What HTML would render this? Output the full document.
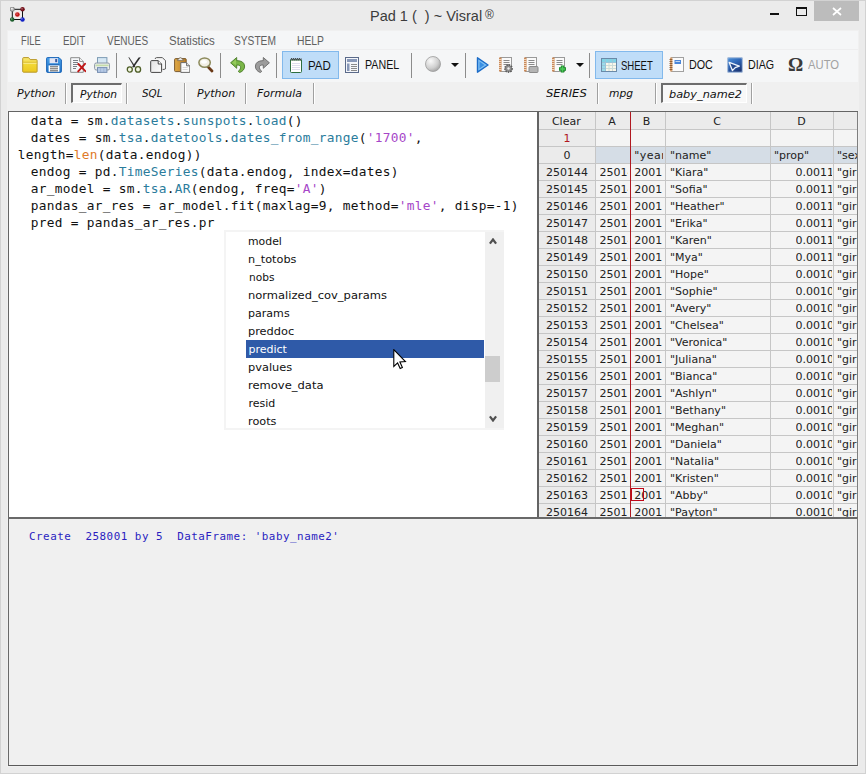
<!DOCTYPE html>
<html>
<head>
<meta charset="utf-8">
<title>Pad 1 ( ) ~ Visral</title>
<style>
*{box-sizing:border-box;margin:0;padding:0}
html,body{width:866px;height:774px;overflow:hidden;background:#ebebeb}
body{position:relative;font-family:"Liberation Sans",sans-serif;color:#000}
.abs{position:absolute}
#win{left:0;top:0;width:866px;height:774px;background:#ebebeb;border:1px solid #d2d2d2}
.ttl{font-size:14.5px;color:#3c3c3c;line-height:18px;white-space:nowrap}
#client{left:8px;top:31px;width:850px;height:735px;background:#f0f0f0;box-shadow:0 0 0 1px #f0f0f0}
#menubar{left:8px;top:31px;width:850px;height:19px;background:#f5f6f7;border-bottom:1px solid #eeeeef}
.mi{font-size:12.3px;line-height:14px;color:#606060;white-space:nowrap}
#toolbar{left:8px;top:50px;width:850px;height:32px;background:#f5f6f7}
.tsep{width:1px;background:#8c8c8c}
.tbtn{font-size:12.3px;line-height:14px;color:#111;white-space:nowrap}
.sel{background:#bfddf8;border:1px solid #82b9ec}
.tab{font-family:"DejaVu Sans",sans-serif;font-style:italic;font-size:11px;line-height:14px;color:#111;white-space:nowrap}
.vsep{width:2px;border-left:1px solid #a0a0a0;border-right:1px solid #fff}
.sunk{border-style:solid;border-width:2px 1px 1px 2px;border-color:#6d6d6d #fff #fff #6d6d6d;background:#f8f8f8}
#editor{left:8px;top:111px;width:529px;height:407px;background:#fff;border-left:1px solid #646464;border-top:1px solid #646464}
#code{left:17.8px;top:112px;font-family:"DejaVu Sans Mono","Liberation Mono",monospace;font-size:12.8px;letter-spacing:.294px;line-height:17px;color:#111;white-space:pre}
#code div{height:17px}
#code .in{margin-left:-3px}
.c1{color:#2b7c9c}.c2{color:#e07a28}.c3{color:#a646c8}
#list{left:224px;top:230px;width:280px;height:200px;background:#fff;border:2px solid #f4f4f4}
.li{font-family:"DejaVu Sans",sans-serif;font-size:11px;line-height:14px;color:#111;white-space:nowrap}
#sheet{left:537px;top:111px;width:321px;height:407px;background:#f0f0f0;border-left:2px solid #646464;border-top:1px solid #646464;overflow:hidden}
.sc{font-family:"DejaVu Sans",sans-serif;font-size:11px;line-height:14px;white-space:nowrap;overflow:hidden}
#console{left:8px;top:517px;width:850px;height:249px;background:#f0f0f0;border:2px solid #696969;border-left-width:1px;border-right:1px solid #7e7e7e;border-bottom:1px solid #5a5a5a}
.ctx{font-family:"DejaVu Sans Mono",monospace;font-size:10.8px;letter-spacing:.5px;line-height:14px;color:#2a1ec0;white-space:pre}
</style>
</head>
<body>
<div id="win" class="abs"></div>
<div id="client" class="abs"></div>
<div id="menubar" class="abs"></div>
<div id="toolbar" class="abs"></div>
<div class="abs mi" id="m1" style="left:21.04px;top:34px;transform:scaleX(0.7580);transform-origin:0 0;">FILE</div>
<div class="abs mi" id="m2" style="left:62.99px;top:34px;transform:scaleX(0.7970);transform-origin:0 0;">EDIT</div>
<div class="abs mi" id="m3" style="left:106.56px;top:34px;transform:scaleX(0.8129);transform-origin:0 0;">VENUES</div>
<div class="abs mi" id="m4" style="left:168.63px;top:34px;transform:scaleX(0.9303);transform-origin:0 0;">Statistics</div>
<div class="abs mi" id="m5" style="left:234.26px;top:34px;transform:scaleX(0.8282);transform-origin:0 0;">SYSTEM</div>
<div class="abs mi" id="m6" style="left:297.12px;top:34px;transform:scaleX(0.8399);transform-origin:0 0;">HELP</div>
<div class="abs ttl" id="title" style="left:370.00px;top:6.6px;transform:scaleX(1.0000);transform-origin:0 0;">Pad 1 (&nbsp; ) ~ Visral&thinsp;<span style="font-size:12px;position:relative;top:-2px">®</span></div>

<svg class="abs" style="left:10px;top:7px" width="16" height="16" viewBox="0 0 16 16">
<rect x="2.3" y="2.3" width="10.2" height="10.2" fill="none" stroke="#111" stroke-width="1"/>
<circle cx="7.4" cy="7.5" r="3.6" fill="#fbe4e4" opacity=".8"/>
<circle cx="7.4" cy="7.5" r="2.3" fill="#c41a1a"/>
<circle cx="2.3" cy="2.2" r="2.25" fill="#b4b4b4" stroke="#555" stroke-width=".5"/>
<circle cx="12.5" cy="2.3" r="2.25" fill="#74101a"/>
<circle cx="2.2" cy="12.5" r="2.25" fill="#1c5e2c"/>
<circle cx="12.5" cy="12.4" r="2.25" fill="#1020c4"/>
<circle cx="1.9" cy="1.7" r=".9" fill="#fff" opacity=".85"/><circle cx="12" cy="1.8" r=".6" fill="#fff" opacity=".75"/><circle cx="11.9" cy="11.8" r=".65" fill="#fff" opacity=".8"/><circle cx="1.8" cy="11.9" r=".6" fill="#fff" opacity=".7"/><circle cx="7" cy="7" r=".6" fill="#fff" opacity=".75"/>
</svg>
<div class="abs" style="left:770px;top:13px;width:9px;height:2px;background:#111"></div>
<div class="abs" style="left:796px;top:7px;width:11px;height:9px;border:1px solid #111;border-top-width:2px"></div>
<div class="abs" style="left:814px;top:1px;width:45px;height:20px;background:#bcbcbc"></div>
<svg class="abs" style="left:832px;top:7px" width="10" height="9" viewBox="0 0 10 9"><path d="M1 1 L9 8 M9 1 L1 8" stroke="#fff" stroke-width="1.7" fill="none"/></svg>
<svg class="abs" style="left:22px;top:57px" width="16" height="16" viewBox="0 0 16 16"><defs><linearGradient id="gf" x1="0" y1="0" x2="0" y2="1"><stop offset="0" stop-color="#f8e878"/><stop offset=".45" stop-color="#f2d836"/><stop offset="1" stop-color="#ecc820"/></linearGradient></defs>
<path d="M.7 1.6 Q.7 .6 1.7 .6 H6 Q7 .6 7.6 1.6 L8.2 2.6 H14.3 Q15.1 2.6 15.1 3.4 V14.4 Q15.1 15.2 14.3 15.2 H1.5 Q.7 15.2 .7 14.4 Z" fill="url(#gf)" stroke="#b8982a" stroke-width="1"/>
<path d="M1.2 5.3 H14.6" stroke="#d9b92c" stroke-width="1"/><path d="M1.3 6.3 H14.5" stroke="#f9ec90" stroke-width="1"/></svg>
<svg class="abs" style="left:46px;top:57px" width="16" height="16" viewBox="0 0 16 16"><defs><linearGradient id="gv" x1="0" y1="0" x2="0" y2="1"><stop offset="0" stop-color="#4aa2ec"/><stop offset="1" stop-color="#1f72c6"/></linearGradient></defs>
<path d="M.6 1.4 Q.6 .6 1.4 .6 H13 L15.4 3 V14.6 Q15.4 15.4 14.6 15.4 H1.4 Q.6 15.4 .6 14.6 Z" fill="url(#gv)" stroke="#1c66b8" stroke-width="1"/>
<rect x="3.6" y="1.2" width="8.4" height="5" fill="#e4e6f4"/><rect x="9.2" y="2" width="2" height="3.2" fill="#3a5aa0"/>
<rect x="2.6" y="7.4" width="10.8" height="1" fill="#1c5aa8"/>
<rect x="2.6" y="8.4" width="10.8" height="6.4" fill="#fff"/><path d="M4 9.8 H12 M4 11.8 H12 M4 13.8 H12" stroke="#4a4a4a" stroke-width=".9"/></svg>
<svg class="abs" style="left:70px;top:57px" width="16" height="16" viewBox="0 0 16 16"><path d="M.7 .7 H9.6 L13.3 4.4 V15.3 H.7 Z" fill="#f6f8fa" stroke="#8a8a8a" stroke-width="1"/><path d="M9.6 .7 V4.4 H13.3" fill="#fff" stroke="#8a8a8a" stroke-width="1"/>
<path d="M3 3.5 H8 M3 5.5 H8 M3 7.5 H8 M3 9.5 H7 M3 11.5 H6" stroke="#7a8088" stroke-width="1"/>
<path d="M8.4 7 L15.4 14.2 M15 6.8 L8.2 14.4" stroke="#c01818" stroke-width="1.9" fill="none" stroke-linecap="round"/></svg>
<svg class="abs" style="left:94px;top:57px" width="16" height="16" viewBox="0 0 16 16"><rect x="3.5" y=".6" width="9.4" height="6.4" fill="#d6e8f4" stroke="#7e9cb4" stroke-width="1"/>
<rect x=".6" y="6" width="15" height="7" rx="1.6" fill="#eaeeec" stroke="#8c98a6" stroke-width="1"/>
<rect x="1.6" y="7.6" width="13" height="1.6" fill="#c4dca8"/>
<rect x="3.5" y="10.6" width="9.4" height="4.8" fill="#b6cae6" stroke="#7890b2" stroke-width="1"/><path d="M6.6 11.2 V15 M9.8 11.2 V15" stroke="#9ab0d0" stroke-width=".8"/></svg>
<div class="abs tsep" style="left:116px;top:53px;height:25px"></div>
<svg class="abs" style="left:126px;top:57px" width="16" height="16" viewBox="0 0 16 16"><path d="M2.3 .3 L3.2 .3 L9.4 9.6 L8.2 10.4 Z" fill="#3a3a3a"/><path d="M14.8 .2 L12.6 .6 L6.2 9.8 L7.6 10.6 Z" fill="#2e2e2e"/>
<ellipse cx="3.8" cy="12.5" rx="2.5" ry="2.6" fill="#f2f6e2" stroke="#4e5e28" stroke-width="1.3"/><ellipse cx="12" cy="12.4" rx="2.6" ry="2.7" fill="#f2f6e2" stroke="#4e5e28" stroke-width="1.3"/></svg>
<svg class="abs" style="left:150px;top:57px" width="16" height="16" viewBox="0 0 16 16"><defs><linearGradient id="gc" x1="0" y1="0" x2="1" y2="1"><stop offset="0" stop-color="#e2e2e2"/><stop offset="1" stop-color="#fdfdfd"/></linearGradient></defs>
<path d="M5.2 2 Q5.2 .6 6.6 .6 H12.4 L15.6 3.8 V11 Q15.6 12.4 14.2 12.4 H12.6" fill="#f6f6f6" stroke="#5a5a5a" stroke-width="1"/>
<path d="M.7 4.6 Q.7 3.6 1.7 3.6 H8.2 L11.6 7 V14.6 Q11.6 15.4 10.8 15.4 H1.5 Q.7 15.4 .7 14.6 Z" fill="url(#gc)" stroke="#444" stroke-width="1"/><path d="M8.2 3.6 V7 H11.6" fill="#fff" stroke="#444" stroke-width="1"/></svg>
<svg class="abs" style="left:174px;top:57px" width="16" height="16" viewBox="0 0 16 16"><defs><linearGradient id="gp" x1="0" y1="0" x2="1" y2="0"><stop offset="0" stop-color="#e0aa48"/><stop offset="1" stop-color="#b87a22"/></linearGradient></defs>
<rect x=".6" y="1.6" width="11.6" height="13" rx="1" fill="url(#gp)" stroke="#7a5a30" stroke-width="1"/>
<path d="M3.4 3.6 V2.2 H4.6 Q5 .6 6.4 .6 Q7.8 .6 8.2 2.2 H9.4 V3.6 Z" fill="#e8e8e8" stroke="#7a6a50" stroke-width=".8"/>
<path d="M6.8 5.6 H12.6 L15.8 8.8 V15.4 H6.8 Z" fill="#fbfbfb" stroke="#6a6a6a" stroke-width="1"/><path d="M12.6 5.6 V8.8 H15.8" fill="#e6e6e6" stroke="#6a6a6a" stroke-width="1"/>
<path d="M8.6 10.5 H13.6 M8.6 12.5 H13.6" stroke="#d8d8d8" stroke-width="1"/></svg>
<svg class="abs" style="left:198px;top:57px" width="16" height="16" viewBox="0 0 16 16"><path d="M9.8 9.6 L14 14" stroke="#6a3a18" stroke-width="2.8" stroke-linecap="round"/>
<ellipse cx="6.6" cy="5.6" rx="5.7" ry="4.7" fill="#f2efe4" stroke="#8c8a5c" stroke-width="1.5"/><ellipse cx="6" cy="4.8" rx="3" ry="1.9" fill="#fff" opacity=".9"/></svg>
<div class="abs tsep" style="left:220px;top:53px;height:25px"></div>
<svg class="abs" style="left:230px;top:57px" width="16" height="16" viewBox="0 0 16 16"><path d="M6.7 .5 L.6 5.8 L6.7 11.3 V8 Q10.8 7.8 10.6 10.8 Q10.4 13 8.2 14.3 L9.6 15.6 Q14.8 13.5 14.6 9 Q14.2 3.8 6.7 3.6 Z" fill="#7ab648" stroke="#4a7a28" stroke-width=".9" stroke-linejoin="round"/><path d="M6 2.6 L2.2 5.8 L6 8 V5 Z" fill="#9cd060" opacity=".8"/></svg>
<svg class="abs" style="left:254px;top:57px" width="16" height="16" viewBox="0 0 16 16"><path d="M9.3 .5 L15.4 5.8 L9.3 11.3 V8 Q5.2 7.8 5.4 10.8 Q5.6 13 7.8 14.3 L6.4 15.6 Q1.2 13.5 1.4 9 Q1.8 3.8 9.3 3.6 Z" fill="#9c9c9c" stroke="#6a6a6a" stroke-width=".9" stroke-linejoin="round"/></svg>
<div class="abs tsep" style="left:276px;top:53px;height:25px"></div>
<div class="abs sel" style="left:282px;top:51px;width:57px;height:28px"></div>
<svg class="abs" style="left:289px;top:57px" width="14" height="16" viewBox="0 0 14 16"><path d="M1.5 3 H12.5 V14.6 Q12.5 15.5 11.6 15.5 H2.4 Q1.5 15.5 1.5 14.6 Z" fill="#fff" stroke="#2e6e3e" stroke-width="1"/>
<path d="M3 6.5 H11 M3 8.5 H11 M3 10.5 H11 M3 12.5 H11" stroke="#dedeee" stroke-width="1"/>
<path d="M1.6 3.2 L2.6 1.2 L3.6 3.2 L4.6 1.2 L5.6 3.2 L6.6 1.2 L7.6 3.2 L8.6 1.2 L9.6 3.2 L10.6 1.2 L11.6 3.2 L12.4 1.6" fill="none" stroke="#3a3a3a" stroke-width=".9"/></svg>
<div class="abs tbtn" id="t_pad" style="left:308.04px;top:58.5px;transform:scaleX(0.9375);transform-origin:0 0;">PAD</div>
<svg class="abs" style="left:345px;top:57px" width="14" height="16" viewBox="0 0 14 16"><rect x=".5" y=".5" width="13" height="15" fill="#f4f6fa" stroke="#5a6a8a"/>
<rect x="2" y="2" width="10" height="3" fill="#8898b8"/>
<rect x="2" y="6.5" width="2.5" height="7.5" fill="#8898b8"/>
<path d="M6 7.5 H12 M6 9.5 H12 M6 11.5 H12 M6 13.5 H12" stroke="#8a8a8a" stroke-width="1.2"/></svg>
<div class="abs tbtn" id="t_panel" style="left:364.55px;top:57.6px;transform:scaleX(0.8675);transform-origin:0 0;">PANEL</div>
<div class="abs tsep" style="left:411px;top:53px;height:25px"></div>
<svg class="abs" style="left:425px;top:56px" width="16" height="16" viewBox="0 0 16 16"><defs><radialGradient id="gs" cx=".35" cy=".3" r=".8"><stop offset="0" stop-color="#fafafa"/><stop offset=".6" stop-color="#cfcfcf"/><stop offset="1" stop-color="#9a9a9a"/></radialGradient></defs>
<circle cx="8" cy="8" r="7.5" fill="url(#gs)" stroke="#9c9c9c" stroke-width=".8"/></svg>
<svg class="abs" style="left:451px;top:63px" width="8" height="4" viewBox="0 0 8 4"><path d="M0 0 H8 L4 4 Z" fill="#111"/></svg>
<div class="abs tsep" style="left:465px;top:53px;height:25px"></div>
<svg class="abs" style="left:476px;top:57px" width="13" height="16" viewBox="0 0 13 16"><path d="M1.5 .8 L12 8 L1.5 15.2 Z" fill="#7fc0f4" stroke="#1c6cc8" stroke-width="1.4" stroke-linejoin="round"/><path d="M3.5 4.5 L8.5 8 L3.5 11.5 Z" fill="#3a90e4"/></svg>
<svg class="abs" style="left:498px;top:57px" width="16" height="16" viewBox="0 0 16 16"><rect x="2.5" y=".5" width="11" height="14" fill="#fafafa" stroke="#9a9a9a"/>
<rect x="1" y=".5" width="2.6" height="14" fill="#c98a5a"/><path d="M1 2.5 H3.6 M1 4.5 H3.6 M1 6.5 H3.6 M1 8.5 H3.6 M1 10.5 H3.6 M1 12.5 H3.6" stroke="#f3dcc6" stroke-width=".9"/>
<path d="M5.5 3.5 H11.5 M5.5 5.5 H11.5 M5.5 7.5 H11.5" stroke="#8a8a8a" stroke-width="1"/><circle cx="10.5" cy="11.5" r="3.6" fill="#8e8e8e" stroke="#5e5e5e" stroke-dasharray="1.4 1" stroke-width="1.6"/><circle cx="10.5" cy="11.5" r="1.2" fill="#f0f0f0"/></svg>
<svg class="abs" style="left:523px;top:57px" width="16" height="16" viewBox="0 0 16 16"><rect x="2.5" y=".5" width="11" height="14" fill="#fafafa" stroke="#9a9a9a"/>
<rect x="1" y=".5" width="2.6" height="14" fill="#c98a5a"/><path d="M1 2.5 H3.6 M1 4.5 H3.6 M1 6.5 H3.6 M1 8.5 H3.6 M1 10.5 H3.6 M1 12.5 H3.6" stroke="#f3dcc6" stroke-width=".9"/>
<path d="M5.5 3.5 H11.5 M5.5 5.5 H11.5 M5.5 7.5 H11.5" stroke="#8a8a8a" stroke-width="1"/><rect x="6" y="9.5" width="9" height="6" rx="1" fill="#b4b4b4" stroke="#8a8a8a"/></svg>
<svg class="abs" style="left:551px;top:57px" width="16" height="16" viewBox="0 0 16 16"><rect x="2.5" y=".5" width="11" height="14" fill="#fafafa" stroke="#9a9a9a"/>
<rect x="1" y=".5" width="2.6" height="14" fill="#c98a5a"/><path d="M1 2.5 H3.6 M1 4.5 H3.6 M1 6.5 H3.6 M1 8.5 H3.6 M1 10.5 H3.6 M1 12.5 H3.6" stroke="#f3dcc6" stroke-width=".9"/>
<path d="M5.5 3.5 H11.5 M5.5 5.5 H11.5 M5.5 7.5 H11.5" stroke="#8a8a8a" stroke-width="1"/><path d="M11.5 8.5 V15.5 M8 12 H15" stroke="#1a8a2a" stroke-width="3.4"/><path d="M11.5 9.3 V14.7 M8.8 12 H14.2" stroke="#4ec85a" stroke-width="1.6"/></svg>
<svg class="abs" style="left:576px;top:63px" width="8" height="4" viewBox="0 0 8 4"><path d="M0 0 H8 L4 4 Z" fill="#111"/></svg>
<div class="abs tsep" style="left:589px;top:53px;height:25px"></div>
<div class="abs sel" style="left:595px;top:51px;width:68px;height:28px"></div>
<svg class="abs" style="left:601px;top:58px" width="16" height="14" viewBox="0 0 16 14"><rect x=".5" y=".5" width="15" height="13" fill="#fff" stroke="#6a8aa8"/>
<rect x="1" y="1" width="14" height="3" fill="#7fd4e6"/><rect x="1" y="4" width="3.5" height="9" fill="#9adcea"/>
<path d="M1 4.5 H15 M1 7.5 H15 M1 10.5 H15 M4.5 1 V13 M8 1 V13 M11.5 1 V13" stroke="#9cc4d8" stroke-width="1"/>
<rect x="5" y="5" width="10" height="8" fill="#f4f0d8" opacity=".55"/></svg>
<div class="abs tbtn" id="t_sheet" style="left:621.13px;top:58.5px;transform:scaleX(0.7759);transform-origin:0 0;">SHEET</div>
<svg class="abs" style="left:669px;top:57px" width="16" height="16" viewBox="0 0 16 16"><rect x="2.5" y=".5" width="12" height="14" fill="#fbfbfb" stroke="#a0a0a0"/>
<rect x="1" y=".5" width="2.4" height="14" fill="#d6a070"/><path d="M.5 2.5 H3.4 M.5 4.5 H3.4 M.5 6.5 H3.4 M.5 8.5 H3.4 M.5 10.5 H3.4 M.5 12.5 H3.4" stroke="#8a5a30" stroke-width=".9"/>
<rect x="5.5" y="3" width="6.5" height="4" fill="#4a86d8"/><path d="M6.5 4.5 H11" stroke="#cfe0f6" stroke-width=".9"/></svg>
<div class="abs tbtn" id="t_doc" style="left:689.03px;top:57.6px;transform:scaleX(0.8741);transform-origin:0 0;">DOC</div>
<svg class="abs" style="left:727px;top:57px" width="16" height="16" viewBox="0 0 16 16"><defs><linearGradient id="gd" x1="0" y1="0" x2=".6" y2="1"><stop offset="0" stop-color="#4e94dc"/><stop offset=".5" stop-color="#2e64b4"/><stop offset="1" stop-color="#1c3878"/></linearGradient></defs>
<rect x=".6" y=".6" width="14.8" height="14.8" rx="1.2" fill="url(#gd)" stroke="#a8bedc" stroke-width="1.2"/>
<path d="M2.2 5.4 L12.3 9.2 L8.2 10.6 L5.4 13.6 Z" fill="#24488c" stroke="#eef4fc" stroke-width="1.3" stroke-linejoin="round"/></svg>
<div class="abs tbtn" id="t_diag" style="left:748.03px;top:57.6px;transform:scaleX(0.8700);transform-origin:0 0;">DIAG</div>
<div class="abs" id="omega" style="left:788px;top:54.3px;font-family:'Liberation Serif',serif;font-weight:bold;font-size:19px;line-height:22px;color:#3a3a3a">Ω</div>
<div class="abs tbtn" id="t_auto" style="left:808.47px;top:57.6px;transform:scaleX(0.9147);transform-origin:0 0;color:#a2a2a2;">AUTO</div>

<div class="abs tab" id="tb1" style="left:16.74px;top:87px;transform:scaleX(1.0059);transform-origin:0 0;">Python</div>
<div class="abs vsep" style="left:65px;top:83px;height:21px"></div>
<div class="abs sunk" style="left:71px;top:83px;width:51px;height:20px"></div>
<div class="abs tab" id="tb2" style="left:79.57px;top:88px;transform:scaleX(0.9730);transform-origin:0 0;">Python</div>
<div class="abs vsep" style="left:126px;top:83px;height:21px"></div>
<div class="abs tab" id="tb3" style="left:142.45px;top:87px;transform:scaleX(0.9379);transform-origin:0 0;">SQL</div>
<div class="abs vsep" style="left:184px;top:83px;height:21px"></div>
<div class="abs tab" id="tb4" style="left:196.54px;top:87px;transform:scaleX(0.9992);transform-origin:0 0;">Python</div>
<div class="abs vsep" style="left:245px;top:83px;height:21px"></div>
<div class="abs tab" id="tb5" style="left:256.98px;top:87px;transform:scaleX(0.9961);transform-origin:0 0;">Formula</div>
<div class="abs vsep" style="left:313px;top:83px;height:21px"></div>
<div class="abs tab" id="tb6" style="left:546.14px;top:87px;transform:scaleX(1.0508);transform-origin:0 0;">SERIES</div>
<div class="abs vsep" style="left:597px;top:83px;height:21px"></div>
<div class="abs tab" id="tb7" style="left:609.49px;top:87px;transform:scaleX(0.9720);transform-origin:0 0;">mpg</div>
<div class="abs vsep" style="left:655px;top:83px;height:21px"></div>
<div class="abs sunk" style="left:661px;top:83px;width:86px;height:20px"></div>
<div class="abs tab" id="tb8" style="left:668.51px;top:88px;transform:scaleX(1.0282);transform-origin:0 0;">baby_name2</div>
<div class="abs vsep" style="left:751px;top:83px;height:21px"></div>

<div id="editor" class="abs"></div>
<div id="code" class="abs"><div class="in">  data = sm.<span class="c1">datasets</span>.<span class="c1">sunspots</span>.<span class="c1">load</span>()</div><div class="in">  dates = sm.<span class="c1">tsa</span>.<span class="c1">datetools</span>.<span class="c1">dates_from_range</span>(<span class="c3">'1700'</span>,</div><div>length=<span class="c2">len</span>(data.endog))</div><div class="in">  endog = pd.<span class="c1">TimeSeries</span>(data.endog, index=dates)</div><div class="in">  ar_model = sm.<span class="c1">tsa</span>.<span class="c1">AR</span>(endog, freq=<span class="c3">'A'</span>)</div><div class="in">  pandas_ar_res = ar_model.fit(maxlag=9, method=<span class="c3">'mle'</span>, disp=-1)</div><div class="in">  pred = pandas_ar_res.pr</div></div>
<div id="list" class="abs"></div>
<div class="abs" style="left:485px;top:232px;width:19px;height:196px;background:#f0f0f0"></div>
<div class="abs" style="left:485px;top:356px;width:15px;height:26px;background:#cdcdcd"></div>
<svg class="abs" style="left:489px;top:238px" width="8" height="7" viewBox="0 0 8 7"><path d="M.9 5.7 L4 1.5 L7.1 5.7" stroke="#505050" stroke-width="2.2" fill="none"/></svg>
<svg class="abs" style="left:489px;top:415px" width="8" height="7" viewBox="0 0 8 7"><path d="M.9 1.3 L4 5.5 L7.1 1.3" stroke="#505050" stroke-width="2.2" fill="none"/></svg>
<div class="abs" style="left:246px;top:340px;width:238px;height:18px;background:#2f5aa8"></div>
<div class="abs li" id="li0" style="left:248.48px;top:234.5px;transform:scaleX(0.9891);transform-origin:0 0;">model</div>
<div class="abs li" id="li1" style="left:248.49px;top:252.5px;transform:scaleX(1.0255);transform-origin:0 0;">n_totobs</div>
<div class="abs li" id="li2" style="left:248.50px;top:270.5px;transform:scaleX(0.9630);transform-origin:0 0;">nobs</div>
<div class="abs li" id="li3" style="left:248.49px;top:288.5px;transform:scaleX(1.0459);transform-origin:0 0;">normalized_cov_params</div>
<div class="abs li" id="li4" style="left:248.48px;top:306.5px;transform:scaleX(1.0053);transform-origin:0 0;">params</div>
<div class="abs li" id="li5" style="left:248.48px;top:324.5px;transform:scaleX(1.0318);transform-origin:0 0;">preddoc</div>
<div class="abs li" id="li6" style="left:248.50px;top:342.5px;transform:scaleX(1.0000);transform-origin:0 0;color:#fff;">predict</div>
<div class="abs li" id="li7" style="left:248.48px;top:360.5px;transform:scaleX(1.0333);transform-origin:0 0;">pvalues</div>
<div class="abs li" id="li8" style="left:248.49px;top:378.5px;transform:scaleX(1.0479);transform-origin:0 0;">remove_data</div>
<div class="abs li" id="li9" style="left:248.50px;top:396.5px;transform:scaleX(1.0000);transform-origin:0 0;">resid</div>
<div class="abs li" id="li10" style="left:248.47px;top:414.5px;transform:scaleX(1.0228);transform-origin:0 0;">roots</div>
<svg class="abs" style="left:392.5px;top:349px" width="14" height="21" viewBox="0 0 14 21"><path d="M.8 .6 L.8 17.4 L4.6 13.9 L7.2 19.5 L9.4 18.5 L6.9 13 L12.4 12.6 Z" fill="#fff" stroke="#000" stroke-width="1.1" stroke-linejoin="miter"/></svg>

<div id="sheet" class="abs"></div>
<div class="abs" style="left:539px;top:112px;width:319px;height:405px;background:#f4f4f4;overflow:hidden" id="shin">
<div class="abs" style="left:0;top:0;width:319px;height:17px;background:#ebebeb"></div>
<div class="abs" style="left:0;top:0;width:56px;height:405px;background:#ebebeb"></div>
<div class="abs" style="left:57px;top:35px;width:262px;height:16px;background:#d5dde6"></div>
<div class="abs" style="left:0;top:17px;width:319px;height:1px;background:#c6c6c6"></div>
<div class="abs" style="left:0;top:34px;width:319px;height:1px;background:#c6c6c6"></div>
<div class="abs" style="left:0;top:51px;width:319px;height:1px;background:#c6c6c6"></div>
<div class="abs" style="left:0;top:68px;width:319px;height:1px;background:#c6c6c6"></div>
<div class="abs" style="left:0;top:85px;width:319px;height:1px;background:#c6c6c6"></div>
<div class="abs" style="left:0;top:102px;width:319px;height:1px;background:#c6c6c6"></div>
<div class="abs" style="left:0;top:119px;width:319px;height:1px;background:#c6c6c6"></div>
<div class="abs" style="left:0;top:136px;width:319px;height:1px;background:#c6c6c6"></div>
<div class="abs" style="left:0;top:153px;width:319px;height:1px;background:#c6c6c6"></div>
<div class="abs" style="left:0;top:170px;width:319px;height:1px;background:#c6c6c6"></div>
<div class="abs" style="left:0;top:187px;width:319px;height:1px;background:#c6c6c6"></div>
<div class="abs" style="left:0;top:204px;width:319px;height:1px;background:#c6c6c6"></div>
<div class="abs" style="left:0;top:221px;width:319px;height:1px;background:#c6c6c6"></div>
<div class="abs" style="left:0;top:238px;width:319px;height:1px;background:#c6c6c6"></div>
<div class="abs" style="left:0;top:255px;width:319px;height:1px;background:#c6c6c6"></div>
<div class="abs" style="left:0;top:272px;width:319px;height:1px;background:#c6c6c6"></div>
<div class="abs" style="left:0;top:289px;width:319px;height:1px;background:#c6c6c6"></div>
<div class="abs" style="left:0;top:306px;width:319px;height:1px;background:#c6c6c6"></div>
<div class="abs" style="left:0;top:323px;width:319px;height:1px;background:#c6c6c6"></div>
<div class="abs" style="left:0;top:340px;width:319px;height:1px;background:#c6c6c6"></div>
<div class="abs" style="left:0;top:357px;width:319px;height:1px;background:#c6c6c6"></div>
<div class="abs" style="left:0;top:374px;width:319px;height:1px;background:#c6c6c6"></div>
<div class="abs" style="left:0;top:391px;width:319px;height:1px;background:#c6c6c6"></div>
<div class="abs" style="left:0;top:408px;width:319px;height:1px;background:#c6c6c6"></div>
<div class="abs" style="left:56px;top:0;width:1px;height:405px;background:#c6c6c6"></div>
<div class="abs" style="left:126px;top:0;width:1px;height:405px;background:#c6c6c6"></div>
<div class="abs" style="left:231px;top:0;width:1px;height:405px;background:#c6c6c6"></div>
<div class="abs" style="left:294px;top:0;width:1px;height:405px;background:#c6c6c6"></div>
<div class="abs" style="left:91px;top:0;width:1px;height:405px;background:#b01820"></div>
<div class="abs" style="left:318px;top:0;width:1px;height:405px;background:#7e7e7e"></div>
<div class="abs sc" style="left:-0.7px;top:3px;width:56px;text-align:center;color:#222">Clear</div>
<div class="abs sc" style="left:56px;top:3px;width:34px;text-align:center;color:#222">A</div>
<div class="abs sc" style="left:90.5px;top:3px;width:34px;text-align:center;color:#222">B</div>
<div class="abs sc" style="left:126px;top:3px;width:104px;text-align:center;color:#222">C</div>
<div class="abs sc" style="left:231.5px;top:3px;width:62px;text-align:center;color:#222">D</div>
<div class="abs sc" style="left:0px;top:20px;width:56px;text-align:center;color:#b01820">1</div>
<div class="abs sc" style="left:0px;top:37px;width:56px;text-align:center;color:#222">0</div>
<div class="abs sc" style="left:95.3px;top:37px;width:28.6px;text-align:left;color:#222;letter-spacing:.45px">"year"</div>
<div class="abs sc" style="left:131px;top:37px;width:100px;text-align:left;color:#222">"name"</div>
<div class="abs sc" style="left:235px;top:37px;width:59px;text-align:left;color:#222">"prop"</div>
<div class="abs sc" style="left:298px;top:37px;width:20px;text-align:left;color:#222">"sex"</div>
<div class="abs sc" style="left:0px;top:54px;width:56px;text-align:center;color:#222">250144</div>
<div class="abs sc" style="left:60.5px;top:54px;width:28.6px;text-align:left;color:#222">250144</div>
<div class="abs sc" style="left:95.3px;top:54px;width:28.6px;text-align:left;color:#222">2001</div>
<div class="abs sc" style="left:131px;top:54px;width:100px;text-align:left;color:#222">"Kiara"</div>
<div class="abs sc" style="left:256.6px;top:54px;width:36px;text-align:left;color:#222">0.001107</div>
<div class="abs sc" style="left:298px;top:54px;width:20px;text-align:left;color:#222">"girl"</div>
<div class="abs sc" style="left:0px;top:71px;width:56px;text-align:center;color:#222">250145</div>
<div class="abs sc" style="left:60.5px;top:71px;width:28.6px;text-align:left;color:#222">250145</div>
<div class="abs sc" style="left:95.3px;top:71px;width:28.6px;text-align:left;color:#222">2001</div>
<div class="abs sc" style="left:131px;top:71px;width:100px;text-align:left;color:#222">"Sofia"</div>
<div class="abs sc" style="left:256.6px;top:71px;width:36px;text-align:left;color:#222">0.001107</div>
<div class="abs sc" style="left:298px;top:71px;width:20px;text-align:left;color:#222">"girl"</div>
<div class="abs sc" style="left:0px;top:88px;width:56px;text-align:center;color:#222">250146</div>
<div class="abs sc" style="left:60.5px;top:88px;width:28.6px;text-align:left;color:#222">250146</div>
<div class="abs sc" style="left:95.3px;top:88px;width:28.6px;text-align:left;color:#222">2001</div>
<div class="abs sc" style="left:131px;top:88px;width:100px;text-align:left;color:#222">"Heather"</div>
<div class="abs sc" style="left:256.6px;top:88px;width:36px;text-align:left;color:#222">0.001107</div>
<div class="abs sc" style="left:298px;top:88px;width:20px;text-align:left;color:#222">"girl"</div>
<div class="abs sc" style="left:0px;top:105px;width:56px;text-align:center;color:#222">250147</div>
<div class="abs sc" style="left:60.5px;top:105px;width:28.6px;text-align:left;color:#222">250147</div>
<div class="abs sc" style="left:95.3px;top:105px;width:28.6px;text-align:left;color:#222">2001</div>
<div class="abs sc" style="left:131px;top:105px;width:100px;text-align:left;color:#222">"Erika"</div>
<div class="abs sc" style="left:256.6px;top:105px;width:36px;text-align:left;color:#222">0.001107</div>
<div class="abs sc" style="left:298px;top:105px;width:20px;text-align:left;color:#222">"girl"</div>
<div class="abs sc" style="left:0px;top:122px;width:56px;text-align:center;color:#222">250148</div>
<div class="abs sc" style="left:60.5px;top:122px;width:28.6px;text-align:left;color:#222">250148</div>
<div class="abs sc" style="left:95.3px;top:122px;width:28.6px;text-align:left;color:#222">2001</div>
<div class="abs sc" style="left:131px;top:122px;width:100px;text-align:left;color:#222">"Karen"</div>
<div class="abs sc" style="left:256.6px;top:122px;width:36px;text-align:left;color:#222">0.001107</div>
<div class="abs sc" style="left:298px;top:122px;width:20px;text-align:left;color:#222">"girl"</div>
<div class="abs sc" style="left:0px;top:139px;width:56px;text-align:center;color:#222">250149</div>
<div class="abs sc" style="left:60.5px;top:139px;width:28.6px;text-align:left;color:#222">250149</div>
<div class="abs sc" style="left:95.3px;top:139px;width:28.6px;text-align:left;color:#222">2001</div>
<div class="abs sc" style="left:131px;top:139px;width:100px;text-align:left;color:#222">"Mya"</div>
<div class="abs sc" style="left:256.6px;top:139px;width:36px;text-align:left;color:#222">0.001107</div>
<div class="abs sc" style="left:298px;top:139px;width:20px;text-align:left;color:#222">"girl"</div>
<div class="abs sc" style="left:0px;top:156px;width:56px;text-align:center;color:#222">250150</div>
<div class="abs sc" style="left:60.5px;top:156px;width:28.6px;text-align:left;color:#222">250150</div>
<div class="abs sc" style="left:95.3px;top:156px;width:28.6px;text-align:left;color:#222">2001</div>
<div class="abs sc" style="left:131px;top:156px;width:100px;text-align:left;color:#222">"Hope"</div>
<div class="abs sc" style="left:256.6px;top:156px;width:36px;text-align:left;color:#222">0.001007</div>
<div class="abs sc" style="left:298px;top:156px;width:20px;text-align:left;color:#222">"girl"</div>
<div class="abs sc" style="left:0px;top:173px;width:56px;text-align:center;color:#222">250151</div>
<div class="abs sc" style="left:60.5px;top:173px;width:28.6px;text-align:left;color:#222">250151</div>
<div class="abs sc" style="left:95.3px;top:173px;width:28.6px;text-align:left;color:#222">2001</div>
<div class="abs sc" style="left:131px;top:173px;width:100px;text-align:left;color:#222">"Sophie"</div>
<div class="abs sc" style="left:256.6px;top:173px;width:36px;text-align:left;color:#222">0.001007</div>
<div class="abs sc" style="left:298px;top:173px;width:20px;text-align:left;color:#222">"girl"</div>
<div class="abs sc" style="left:0px;top:190px;width:56px;text-align:center;color:#222">250152</div>
<div class="abs sc" style="left:60.5px;top:190px;width:28.6px;text-align:left;color:#222">250152</div>
<div class="abs sc" style="left:95.3px;top:190px;width:28.6px;text-align:left;color:#222">2001</div>
<div class="abs sc" style="left:131px;top:190px;width:100px;text-align:left;color:#222">"Avery"</div>
<div class="abs sc" style="left:256.6px;top:190px;width:36px;text-align:left;color:#222">0.001007</div>
<div class="abs sc" style="left:298px;top:190px;width:20px;text-align:left;color:#222">"girl"</div>
<div class="abs sc" style="left:0px;top:207px;width:56px;text-align:center;color:#222">250153</div>
<div class="abs sc" style="left:60.5px;top:207px;width:28.6px;text-align:left;color:#222">250153</div>
<div class="abs sc" style="left:95.3px;top:207px;width:28.6px;text-align:left;color:#222">2001</div>
<div class="abs sc" style="left:131px;top:207px;width:100px;text-align:left;color:#222">"Chelsea"</div>
<div class="abs sc" style="left:256.6px;top:207px;width:36px;text-align:left;color:#222">0.001007</div>
<div class="abs sc" style="left:298px;top:207px;width:20px;text-align:left;color:#222">"girl"</div>
<div class="abs sc" style="left:0px;top:224px;width:56px;text-align:center;color:#222">250154</div>
<div class="abs sc" style="left:60.5px;top:224px;width:28.6px;text-align:left;color:#222">250154</div>
<div class="abs sc" style="left:95.3px;top:224px;width:28.6px;text-align:left;color:#222">2001</div>
<div class="abs sc" style="left:131px;top:224px;width:100px;text-align:left;color:#222">"Veronica"</div>
<div class="abs sc" style="left:256.6px;top:224px;width:36px;text-align:left;color:#222">0.001007</div>
<div class="abs sc" style="left:298px;top:224px;width:20px;text-align:left;color:#222">"girl"</div>
<div class="abs sc" style="left:0px;top:241px;width:56px;text-align:center;color:#222">250155</div>
<div class="abs sc" style="left:60.5px;top:241px;width:28.6px;text-align:left;color:#222">250155</div>
<div class="abs sc" style="left:95.3px;top:241px;width:28.6px;text-align:left;color:#222">2001</div>
<div class="abs sc" style="left:131px;top:241px;width:100px;text-align:left;color:#222">"Juliana"</div>
<div class="abs sc" style="left:256.6px;top:241px;width:36px;text-align:left;color:#222">0.001007</div>
<div class="abs sc" style="left:298px;top:241px;width:20px;text-align:left;color:#222">"girl"</div>
<div class="abs sc" style="left:0px;top:258px;width:56px;text-align:center;color:#222">250156</div>
<div class="abs sc" style="left:60.5px;top:258px;width:28.6px;text-align:left;color:#222">250156</div>
<div class="abs sc" style="left:95.3px;top:258px;width:28.6px;text-align:left;color:#222">2001</div>
<div class="abs sc" style="left:131px;top:258px;width:100px;text-align:left;color:#222">"Bianca"</div>
<div class="abs sc" style="left:256.6px;top:258px;width:36px;text-align:left;color:#222">0.001007</div>
<div class="abs sc" style="left:298px;top:258px;width:20px;text-align:left;color:#222">"girl"</div>
<div class="abs sc" style="left:0px;top:275px;width:56px;text-align:center;color:#222">250157</div>
<div class="abs sc" style="left:60.5px;top:275px;width:28.6px;text-align:left;color:#222">250157</div>
<div class="abs sc" style="left:95.3px;top:275px;width:28.6px;text-align:left;color:#222">2001</div>
<div class="abs sc" style="left:131px;top:275px;width:100px;text-align:left;color:#222">"Ashlyn"</div>
<div class="abs sc" style="left:256.6px;top:275px;width:36px;text-align:left;color:#222">0.001007</div>
<div class="abs sc" style="left:298px;top:275px;width:20px;text-align:left;color:#222">"girl"</div>
<div class="abs sc" style="left:0px;top:292px;width:56px;text-align:center;color:#222">250158</div>
<div class="abs sc" style="left:60.5px;top:292px;width:28.6px;text-align:left;color:#222">250158</div>
<div class="abs sc" style="left:95.3px;top:292px;width:28.6px;text-align:left;color:#222">2001</div>
<div class="abs sc" style="left:131px;top:292px;width:100px;text-align:left;color:#222">"Bethany"</div>
<div class="abs sc" style="left:256.6px;top:292px;width:36px;text-align:left;color:#222">0.001007</div>
<div class="abs sc" style="left:298px;top:292px;width:20px;text-align:left;color:#222">"girl"</div>
<div class="abs sc" style="left:0px;top:309px;width:56px;text-align:center;color:#222">250159</div>
<div class="abs sc" style="left:60.5px;top:309px;width:28.6px;text-align:left;color:#222">250159</div>
<div class="abs sc" style="left:95.3px;top:309px;width:28.6px;text-align:left;color:#222">2001</div>
<div class="abs sc" style="left:131px;top:309px;width:100px;text-align:left;color:#222">"Meghan"</div>
<div class="abs sc" style="left:256.6px;top:309px;width:36px;text-align:left;color:#222">0.001007</div>
<div class="abs sc" style="left:298px;top:309px;width:20px;text-align:left;color:#222">"girl"</div>
<div class="abs sc" style="left:0px;top:326px;width:56px;text-align:center;color:#222">250160</div>
<div class="abs sc" style="left:60.5px;top:326px;width:28.6px;text-align:left;color:#222">250160</div>
<div class="abs sc" style="left:95.3px;top:326px;width:28.6px;text-align:left;color:#222">2001</div>
<div class="abs sc" style="left:131px;top:326px;width:100px;text-align:left;color:#222">"Daniela"</div>
<div class="abs sc" style="left:256.6px;top:326px;width:36px;text-align:left;color:#222">0.001007</div>
<div class="abs sc" style="left:298px;top:326px;width:20px;text-align:left;color:#222">"girl"</div>
<div class="abs sc" style="left:0px;top:343px;width:56px;text-align:center;color:#222">250161</div>
<div class="abs sc" style="left:60.5px;top:343px;width:28.6px;text-align:left;color:#222">250161</div>
<div class="abs sc" style="left:95.3px;top:343px;width:28.6px;text-align:left;color:#222">2001</div>
<div class="abs sc" style="left:131px;top:343px;width:100px;text-align:left;color:#222">"Natalia"</div>
<div class="abs sc" style="left:256.6px;top:343px;width:36px;text-align:left;color:#222">0.001007</div>
<div class="abs sc" style="left:298px;top:343px;width:20px;text-align:left;color:#222">"girl"</div>
<div class="abs sc" style="left:0px;top:360px;width:56px;text-align:center;color:#222">250162</div>
<div class="abs sc" style="left:60.5px;top:360px;width:28.6px;text-align:left;color:#222">250162</div>
<div class="abs sc" style="left:95.3px;top:360px;width:28.6px;text-align:left;color:#222">2001</div>
<div class="abs sc" style="left:131px;top:360px;width:100px;text-align:left;color:#222">"Kristen"</div>
<div class="abs sc" style="left:256.6px;top:360px;width:36px;text-align:left;color:#222">0.001007</div>
<div class="abs sc" style="left:298px;top:360px;width:20px;text-align:left;color:#222">"girl"</div>
<div class="abs sc" style="left:0px;top:377px;width:56px;text-align:center;color:#222">250163</div>
<div class="abs sc" style="left:60.5px;top:377px;width:28.6px;text-align:left;color:#222">250163</div>
<div class="abs sc" style="left:95.3px;top:377px;width:28.6px;text-align:left;color:#222">2001</div>
<div class="abs sc" style="left:131px;top:377px;width:100px;text-align:left;color:#222">"Abby"</div>
<div class="abs sc" style="left:256.6px;top:377px;width:36px;text-align:left;color:#222">0.001007</div>
<div class="abs sc" style="left:298px;top:377px;width:20px;text-align:left;color:#222">"girl"</div>
<div class="abs sc" style="left:0px;top:394px;width:56px;text-align:center;color:#222">250164</div>
<div class="abs sc" style="left:60.5px;top:394px;width:28.6px;text-align:left;color:#222">250164</div>
<div class="abs sc" style="left:95.3px;top:394px;width:28.6px;text-align:left;color:#222">2001</div>
<div class="abs sc" style="left:131px;top:394px;width:100px;text-align:left;color:#222">"Payton"</div>
<div class="abs sc" style="left:256.6px;top:394px;width:36px;text-align:left;color:#222">0.001007</div>
<div class="abs sc" style="left:298px;top:394px;width:20px;text-align:left;color:#222">"girl"</div>
<div class="abs" style="left:92px;top:376px;width:13px;height:13px;border:1px solid #c00818"></div>
</div>

<div id="console" class="abs"></div>
<div class="abs ctx" id="ctext" style="left:28.50px;top:530px;transform:scaleX(1.0078);transform-origin:0 0;">Create  258001 by 5  DataFrame: 'baby_name2'</div>

</body>
</html>
